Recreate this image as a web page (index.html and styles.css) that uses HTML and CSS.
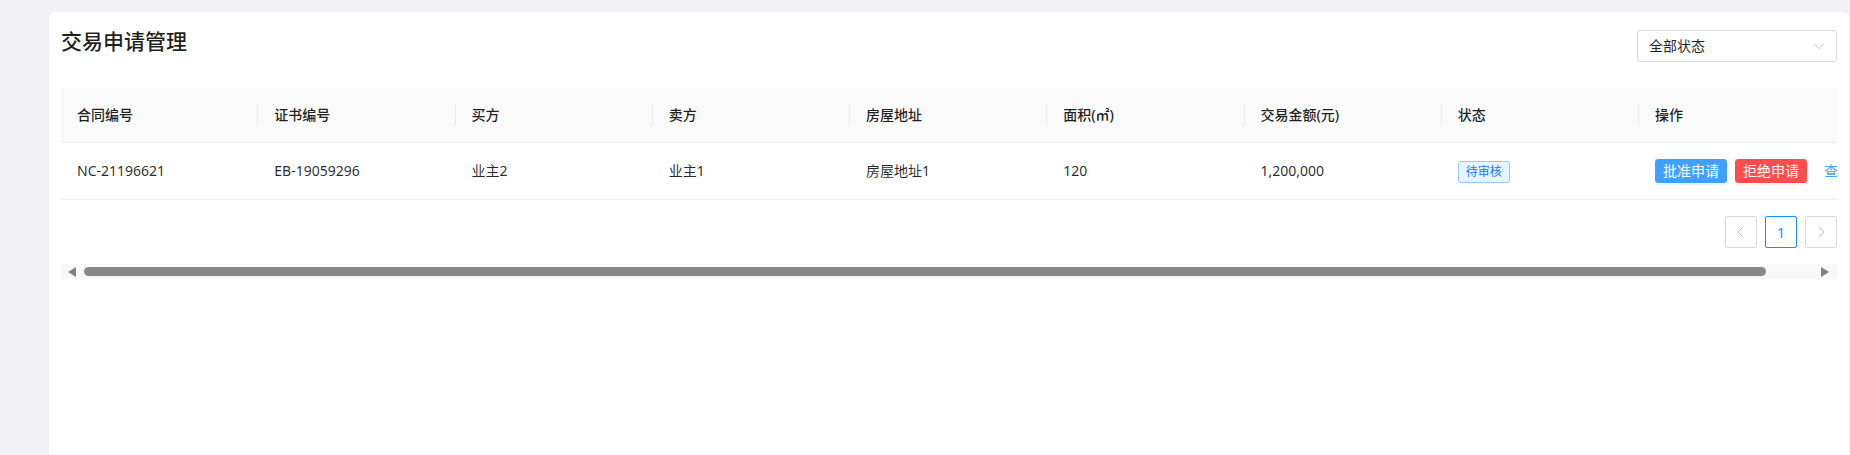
FILE: index.html
```html
<!DOCTYPE html>
<html lang="zh-CN">
<head>
<meta charset="utf-8">
<title>交易申请管理</title>
<link rel="stylesheet" href="styles.css">
</head>
<body>
<div class="page">
  <div class="card">
    <div class="card-head">
      <h2 class="title">交易申请管理</h2>
      <div class="select">
        <span class="select-value">全部状态</span>
        <svg class="select-arrow" width="12" height="12" viewBox="0 0 12 12"><polyline points="1.5,4 6,8.5 10.5,4" fill="none" stroke="#c4c4c4" stroke-width="1"/></svg>
      </div>
    </div>
    <div class="table-wrap">
      <table class="table">
        <colgroup>
          <col class="c"><col class="c"><col class="c"><col class="c"><col class="c"><col class="c"><col class="c"><col class="c"><col class="c-last">
        </colgroup>
        <thead>
          <tr>
            <th>合同编号</th>
            <th>证书编号</th>
            <th>买方</th>
            <th>卖方</th>
            <th>房屋地址</th>
            <th>面积(㎡)</th>
            <th>交易金额(元)</th>
            <th>状态</th>
            <th class="last">操作</th>
          </tr>
        </thead>
        <tbody>
          <tr>
            <td>NC-21196621</td>
            <td>EB-19059296</td>
            <td>业主2</td>
            <td>业主1</td>
            <td>房屋地址1</td>
            <td>120</td>
            <td>1,200,000</td>
            <td><span class="tag">待审核</span></td>
            <td>
              <div class="actions">
                <button class="btn btn-primary">批准申请</button>
                <button class="btn btn-danger">拒绝申请</button>
                <button class="btn btn-link">查看详情</button>
              </div>
            </td>
          </tr>
        </tbody>
      </table>
      <div class="pagination">
        <span class="pg-item pg-disabled">
          <svg width="14" height="14" viewBox="0 0 14 14"><polyline points="9,2 4,7 9,12" fill="none" stroke="#c0c0c0" stroke-width="1"/></svg>
        </span>
        <span class="pg-item pg-active">1</span>
        <span class="pg-item pg-disabled">
          <svg width="14" height="14" viewBox="0 0 14 14"><polyline points="5,2 10,7 5,12" fill="none" stroke="#c0c0c0" stroke-width="1"/></svg>
        </span>
      </div>
    </div>
    <div class="hscroll">
      <svg class="hs-arrow" width="8" height="10" viewBox="0 0 8 10"><polygon points="8,0 8,10 0,5" fill="#808080"/></svg>
      <div class="hs-thumb"></div>
      <svg class="hs-arrow hs-right" width="8" height="10" viewBox="0 0 8 10"><polygon points="0,0 0,10 8,5" fill="#808080"/></svg>
    </div>
  </div>
</div>
</body>
</html>
```
FILE: styles.css
```css
* { box-sizing: border-box; }
html, body {
  margin: 0;
  height: 100%;
  overflow: hidden;
  background: #f0f0f5;
  font-family: "Noto Sans", "Noto Sans CJK SC", sans-serif;
  font-size: 14px;
  color: rgba(0, 0, 0, 0.85);
}
.page {
  height: 100%;
  padding: 12px 1px 0 49px;
}
.card {
  width: 1800px;
  height: 100%;
  background: #fff;
  border-radius: 6px 6px 0 0;
  padding: 14px 12px 12px;
}
.card-head {
  display: flex;
  justify-content: space-between;
  align-items: flex-start;
  margin-bottom: 26px;
}
.title {
  margin: 0;
  font-size: 21px;
  line-height: 30px;
  font-weight: 500;
  color: rgba(0, 0, 0, 0.88);
}
.select {
  margin-top: 4px;
  width: 200px;
  height: 32px;
  border: 1px solid #d9d9d9;
  border-radius: 3px;
  padding: 0 11px;
  display: flex;
  align-items: center;
  justify-content: space-between;
  color: rgba(0, 0, 0, 0.88);
}
.select-value { line-height: 30px; }
.table-wrap {
  width: 1776px;
  overflow: hidden;
  padding-bottom: 16px;
}
.table {
  width: 1840px;
  table-layout: fixed;
  border-collapse: collapse;
  border-spacing: 0;
}
.c { width: 197.25px; }
.c-last { width: 262px; }
.table th {
  position: relative;
  background: #fafafa;
  text-align: left;
  font-weight: 500;
  color: rgba(0, 0, 0, 0.88);
  padding: 16px;
  line-height: 22px;
  border-bottom: 1px solid #f0f0f0;
  white-space: nowrap;
}
.table th::before {
  content: "";
  position: absolute;
  right: 0;
  top: 50%;
  width: 1px;
  height: 22px;
  transform: translateY(-50%);
  background: #ebebeb;
}
.table th.last::before { display: none; }
.table td {
  padding: 16px;
  line-height: 24px;
  border-bottom: 1px solid #f0f0f0;
  white-space: nowrap;
  overflow: hidden;
}
.tag {
  display: inline-block;
  font-size: 12px;
  line-height: 20px;
  padding: 0 7px;
  border: 1px solid #91caff;
  border-radius: 3px;
  background: #e6f4ff;
  color: #1677ff;
  vertical-align: middle;
}
.actions {
  display: flex;
  gap: 8px;
  align-items: center;
}
.btn {
  font-family: inherit;
  font-size: 14px;
  height: 24px;
  line-height: 22px;
  padding: 0 7px;
  border: 1px solid transparent;
  border-radius: 3px;
  cursor: pointer;
  white-space: nowrap;
}
.btn-primary {
  background: #40a0ff;
  border-color: #40a0ff;
  color: #fff;
  box-shadow: 0 2px 0 rgba(5, 145, 255, 0.1);
}
.btn-danger {
  background: #ff4d4f;
  border-color: #ff4d4f;
  color: #fff;
  box-shadow: 0 2px 0 rgba(255, 38, 5, 0.06);
}
.btn-link {
  background: transparent;
  color: #40a0ff;
  margin-left: 1px;
}
.pagination {
  display: flex;
  justify-content: flex-end;
  gap: 8px;
  margin-top: 16px;
}
.pg-item {
  width: 32px;
  height: 32px;
  border: 1px solid #d9d9d9;
  border-radius: 2px;
  display: flex;
  align-items: center;
  justify-content: center;
  background: #fff;
  color: rgba(0, 0, 0, 0.88);
}
.pg-active {
  border-color: #1890ff;
  color: #1890ff;
}
.hscroll {
  width: 1776px;
  height: 15px;
  background: #f8f8f8;
  display: flex;
  align-items: center;
  padding: 0 8px 0 7px;
}
.hs-arrow { flex: none; }
.hs-thumb {
  width: 1682px;
  height: 9px;
  margin-left: 8px;
  border-radius: 5px;
  background: #888;
}
.hs-right { margin-left: auto; }
```
